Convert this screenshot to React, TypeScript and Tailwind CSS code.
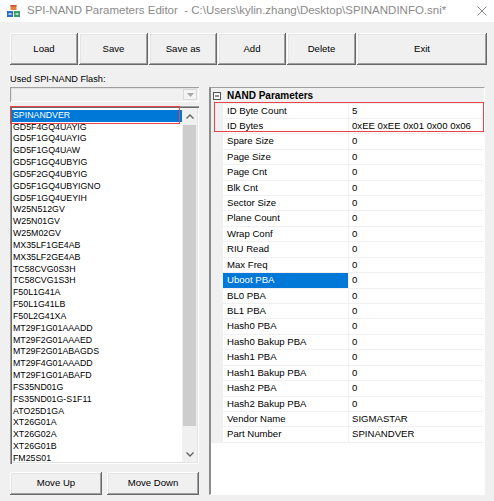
import React from "react"

const flashList = [
  "SPINANDVER",
  "GD5F4GQ4UAYIG",
  "GD5F1GQ4UAYIG",
  "GD5F1GQ4UAW",
  "GD5F1GQ4UBYIG",
  "GD5F2GQ4UBYIG",
  "GD5F1GQ4UBYIGNO",
  "GD5F1GQ4UEYIH",
  "W25N512GV",
  "W25N01GV",
  "W25M02GV",
  "MX35LF1GE4AB",
  "MX35LF2GE4AB",
  "TC58CVG0S3H",
  "TC58CVG1S3H",
  "F50L1G41A",
  "F50L1G41LB",
  "F50L2G41XA",
  "MT29F1G01AAADD",
  "MT29F2G01AAAED",
  "MT29F2G01ABAGDS",
  "MT29F4G01AAADD",
  "MT29F1G01ABAFD",
  "FS35ND01G",
  "FS35ND01G-S1F11",
  "ATO25D1GA",
  "XT26G01A",
  "XT26G02A",
  "XT26G01B",
  "FM25S01",
]

const params: [string, string][] = [
  ["ID Byte Count", "5"],
  ["ID Bytes", "0xEE 0xEE 0x01 0x00 0x06"],
  ["Spare Size", "0"],
  ["Page Size", "0"],
  ["Page Cnt", "0"],
  ["Blk Cnt", "0"],
  ["Sector Size", "0"],
  ["Plane Count", "0"],
  ["Wrap Conf", "0"],
  ["RIU Read", "0"],
  ["Max Freq", "0"],
  ["Uboot PBA", "0"],
  ["BL0 PBA", "0"],
  ["BL1 PBA", "0"],
  ["Hash0 PBA", "0"],
  ["Hash0 Bakup PBA", "0"],
  ["Hash1 PBA", "0"],
  ["Hash1 Bakup PBA", "0"],
  ["Hash2 PBA", "0"],
  ["Hash2 Bakup PBA", "0"],
  ["Vendor Name", "SIGMASTAR"],
  ["Part Number", "SPINANDVER"],
]

function WinButton({ label, className = "" }: { label: string; className?: string }) {
  return (
    <button
      className={
        "flex items-center justify-center bg-[#f0f0f0] text-[9.6px] text-black shadow-[inset_-1px_-1px_0_#696969,inset_1px_1px_0_#ffffff,inset_-2px_-2px_0_#a0a0a0,inset_2px_2px_0_#e3e3e3] " +
        className
      }
    >
      {label}
    </button>
  )
}

function AppIcon() {
  return (
    <svg width="13" height="12" viewBox="0 0 13 12" className="ml-[7px] shrink-0">
      <rect x="3.5" y="0" width="6" height="5" fill="#e3833f" />
      <rect x="3.5" y="0" width="6" height="1.5" fill="#c9532c" />
      <rect x="0" y="6" width="6" height="6" fill="#2f6fc4" />
      <rect x="7" y="6" width="6" height="6" fill="#3d9a6a" />
      <rect x="1.5" y="8" width="3" height="2" fill="#9fd0f5" />
      <rect x="8.5" y="8" width="3" height="2" fill="#a6e0b8" />
    </svg>
  )
}

export default function App() {
  return (
    <div className="flex h-[501px] w-[494px] flex-col overflow-hidden bg-[#f0f0f0] font-['Liberation_Sans',Arial,sans-serif] text-black">
      {/* title bar */}
      <div className="flex h-[22px] shrink-0 items-center bg-white">
        <AppIcon />
        <span className="ml-[7px] whitespace-pre text-[11.5px] text-[#8a8a8a]">
          {"SPI-NAND Parameters Editor  - C:\\Users\\kylin.zhang\\Desktop\\SPINANDINFO.sni*"}
        </span>
        <svg width="10" height="10" viewBox="0 0 10 10" className="ml-auto mr-[7px]">
          <path d="M0.5 0.5 L9.5 9.5 M9.5 0.5 L0.5 9.5" stroke="#8a8a8a" strokeWidth="1" />
        </svg>
      </div>

      {/* toolbar */}
      <div className="mt-[11px] flex h-[32px] shrink-0 gap-[1px] pl-[10px]">
        <WinButton label="Load" className="w-[68px]" />
        <WinButton label="Save" className="w-[69px]" />
        <WinButton label="Save as" className="w-[68px]" />
        <WinButton label="Add" className="w-[68px]" />
        <WinButton label="Delete" className="w-[69px]" />
        <WinButton label="Exit" className="w-[130px]" />
      </div>

      <div className="flex">
        {/* left column */}
        <div className="ml-[10px] flex w-[189px] flex-col">
          <div className="mt-[8px] h-[12px] whitespace-nowrap text-[9.2px] leading-[12px]">Used SPI-NAND Flash:</div>

          <div className="mt-[2px] flex h-[15px] items-center justify-end bg-[#f0f0f0] pr-[2px] shadow-[inset_1px_1px_0_#a0a0a0,inset_-1px_-1px_0_#ffffff,inset_2px_2px_0_#e3e3e3]">
            <div className="flex h-[11px] w-[14px] items-center justify-center border border-[#d9d9d9] bg-[#f4f4f4]">
              <svg width="7" height="4" viewBox="0 0 7 4">
                <path d="M0 0 L7 0 L3.5 4 Z" fill="#a8a8a8" />
              </svg>
            </div>
          </div>

          <div className="relative mt-[4px] flex h-[358px] bg-white p-[2px] shadow-[inset_1px_1px_0_#a0a0a0,inset_2px_2px_0_#696969,inset_-1px_-1px_0_#ffffff,inset_-2px_-2px_0_#e3e3e3]">
            <div className="flex-1 overflow-hidden pt-[1.8px]">
              {flashList.map((name, i) => (
                <div
                  key={name}
                  className={
                    i === 0
                      ? "h-[11.84px] whitespace-nowrap bg-[#0078d7] pl-[1px] text-[8.8px] leading-[11.84px] text-white"
                      : "h-[11.84px] whitespace-nowrap pl-[1px] text-[8.8px] leading-[11.84px]"
                  }
                >
                  {name}
                </div>
              ))}
            </div>
            <div className="flex w-[15px] flex-col bg-[#f0f0f0]">
              <div className="flex h-[17px] items-center justify-center">
                <svg width="8" height="5" viewBox="0 0 8 5">
                  <path d="M0.5 4.5 L4 1 L7.5 4.5" stroke="#606060" strokeWidth="1.3" fill="none" />
                </svg>
              </div>
              <div className="mx-[1px] h-[301px] bg-[#cdcdcd]" />
              <div className="flex-1" />
              <div className="flex h-[15px] items-center justify-center">
                <svg width="8" height="5" viewBox="0 0 8 5">
                  <path d="M0.5 0.5 L4 4 L7.5 0.5" stroke="#606060" strokeWidth="1.3" fill="none" />
                </svg>
              </div>
            </div>
            {/* annotation */}
            <div className="absolute left-0 top-0 h-[18px] w-[170px] border-[1.5px] border-[#e8434a]" />
          </div>

          <div className="mt-[8px] flex h-[23px] gap-[5px]">
            <WinButton label="Move Up" className="w-[92px]" />
            <WinButton label="Move Down" className="w-[92px]" />
          </div>
        </div>

        {/* property grid */}
        <div className="relative ml-[10px] mt-[22px] flex h-[408px] w-[276px] flex-col border-b border-l-2 border-r border-t border-b-white border-l-[#8c8c8c] border-r-white border-t-[#a0a0a0] bg-white text-[9.6px]">
          <div className="flex h-[15.5px] shrink-0 items-center bg-[#f0f0f0]">
            <svg width="8" height="8" viewBox="0 0 8 8" className="ml-[2px]">
              <rect x="0.5" y="0.5" width="7" height="7" fill="white" stroke="#555" strokeWidth="1" />
              <path d="M2 4 H6" stroke="#222" strokeWidth="1" />
            </svg>
            <span className="ml-[6px] text-[10px] font-bold">NAND Parameters</span>
          </div>
          {params.map(([label, value]) => (
            <div key={label} className="flex h-[15.43px] shrink-0">
              <div className="w-[12px] bg-[#f0f0f0]" />
              <div
                className={
                  label === "Uboot PBA"
                    ? "flex w-[126px] items-center border-b border-r border-[#f0f0f0] bg-[#0078d7] pl-[4px] text-white"
                    : "flex w-[126px] items-center border-b border-r border-[#f0f0f0] pl-[4px]"
                }
              >
                {label}
              </div>
              <div className="flex flex-1 items-center whitespace-nowrap border-b border-[#f0f0f0] pl-[3px]">{value}</div>
            </div>
          ))}
          {/* annotation */}
          <div className="absolute left-[3px] top-[13.7px] h-[30.6px] w-[270px] border-[1.5px] border-[#e8434a]" />
        </div>
      </div>
    </div>
  )
}
